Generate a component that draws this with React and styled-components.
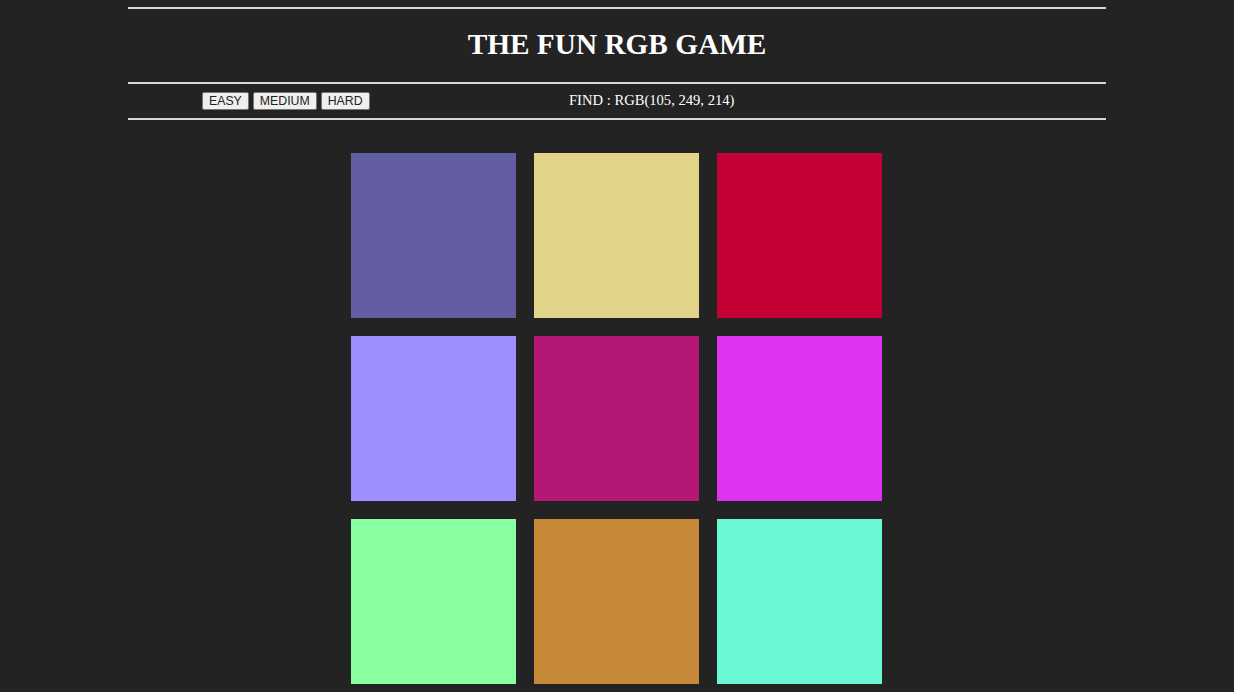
import React from "react";
import styled, { createGlobalStyle } from "styled-components";

const GlobalStyle = createGlobalStyle`
  html, body {
    margin: 0;
    padding: 0;
    background-color: #232323;
  }
`;

const colors = [
  "rgb(99, 94, 161)",
  "rgb(225, 211, 135)",
  "rgb(196, 0, 52)",
  "rgb(158, 143, 255)",
  "rgb(181, 23, 119)",
  "rgb(222, 52, 240)",
  "rgb(136, 255, 160)",
  "rgb(199, 137, 56)",
  "rgb(105, 249, 214)",
];

const App = () => {
  return (
    <Page>
      <GlobalStyle />
      <Wrapper>
        <Rule />
        <Title>THE FUN RGB GAME</Title>
        <Rule />
        <Toolbar>
          <Modes>
            <ModeBtn>EASY</ModeBtn>
            <ModeBtn>MEDIUM</ModeBtn>
            <ModeBtn>HARD</ModeBtn>
          </Modes>
          <Find>FIND : RGB(105, 249, 214)</Find>
        </Toolbar>
        <Rule />
      </Wrapper>
      <Board>
        {colors.map((c) => (
          <Square key={c} color={c} />
        ))}
      </Board>
    </Page>
  );
};

const Page = styled.div`
  padding-top: 7px;
  font-family: "Liberation Serif", "Times New Roman", serif;
  color: #ffffff;
`;

const Wrapper = styled.div`
  width: 978px;
  margin: 0 auto;
`;

const Rule = styled.div`
  height: 2px;
  background-color: #d6d6d6;
`;

const Title = styled.h1`
  margin: 0;
  height: 73px;
  line-height: 71px;
  text-align: center;
  font-size: 29.3px;
  font-weight: bold;
`;

const Toolbar = styled.div`
  display: flex;
  align-items: center;
  height: 34px;
`;

const Modes = styled.div`
  display: flex;
  gap: 4px;
  margin-left: 74px;
  width: 367px;
`;

const ModeBtn = styled.button`
  font-family: "Liberation Sans", Arial, sans-serif;
  font-size: 12.3px;
  color: #222;
  background-color: #efefef;
  border: 1px solid #767676;
  border-radius: 2px;
  padding: 1px 6px;
  height: 18px;
  line-height: 14px;
`;

const Find = styled.div`
  font-size: 14.6px;
  margin-top: -1px;
`;

const Board = styled.div`
  display: grid;
  grid-template-columns: repeat(3, 165px);
  gap: 18px;
  justify-content: center;
  margin-top: 33px;
  padding-right: 1px;
`;

const Square = styled.div`
  width: 165px;
  height: 165px;
  background-color: ${(p) => p.color};
`;

export default App;
